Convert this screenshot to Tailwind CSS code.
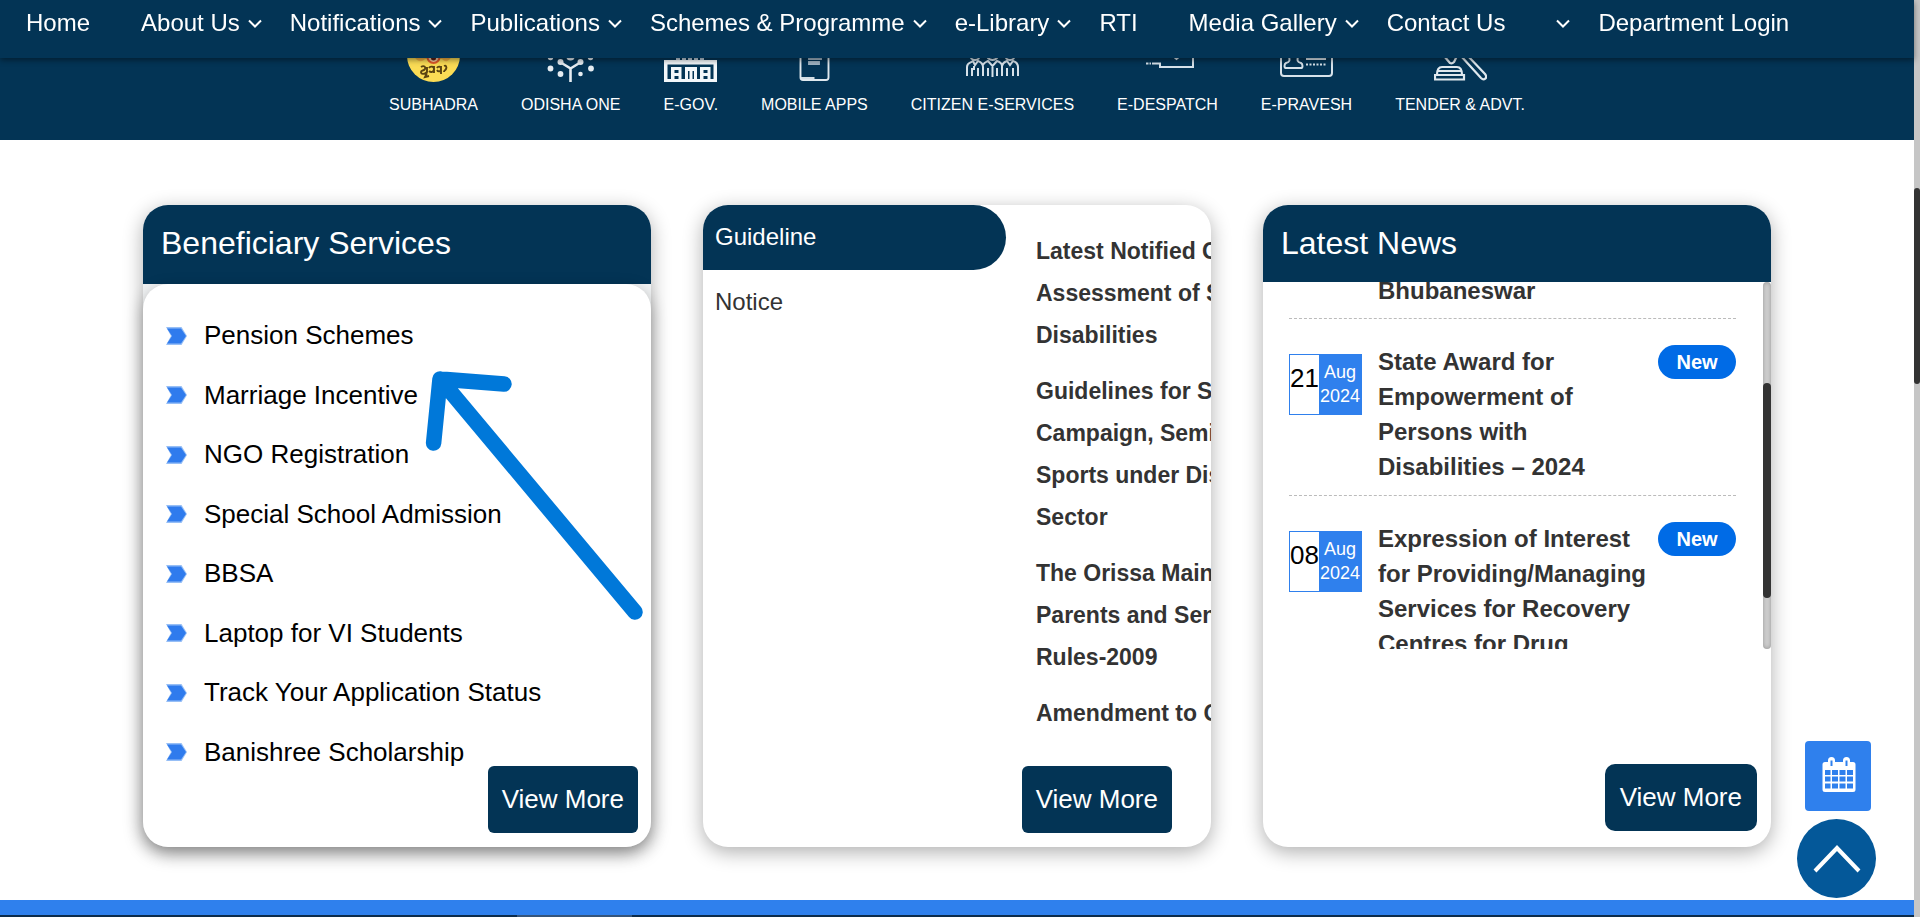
<!DOCTYPE html>
<html lang="en">
<head>
<meta charset="utf-8">
<meta name="viewport" content="width=device-width, initial-scale=1">
<title>Department Services</title>
<script src="https://cdn.jsdelivr.net/npm/@tailwindcss/browser@4"></script>
</head>
<body class="flex bg-white font-['Liberation_Sans',Arial,sans-serif] text-black">
<svg class="hidden" aria-hidden="true">
  <symbol id="chev" viewBox="0 0 14 10"><path d="M1 1.5l6 6 6-6" fill="none" stroke="currentColor" stroke-width="2"/></symbol>
  <symbol id="bullet" viewBox="0 0 21 18"><path d="M0 0h15.500l5.500 9-5.500 9H0l5-9z" fill="#2f80ed" opacity=".5"/><path d="M1 1.500h14l5 7.500-5 7.500H1l5-7.500z" fill="#2f7bed"/></symbol>
</svg>

<div class="min-w-0 flex-1">
  <nav class="fixed left-0 right-[6px] top-0 z-20 bg-[#033455] pb-[17px] pl-[26px] pt-[5px] text-2xl leading-9 text-white shadow-[0_2px_6px_rgba(0,0,0,0.45)]">
    <ul class="flex whitespace-nowrap leading-9">
      <li><a href="#" class="mr-[51px]">Home</a></li>
      <li><a href="#" class="mr-7 flex items-center gap-2">About Us<svg class="h-[10px] w-[14px] translate-y-px"><use href="#chev"/></svg></a></li>
      <li><a href="#" class="mr-7 flex items-center gap-2">Notifications<svg class="h-[10px] w-[14px] translate-y-px"><use href="#chev"/></svg></a></li>
      <li><a href="#" class="mr-7 flex items-center gap-2">Publications<svg class="h-[10px] w-[14px] translate-y-px"><use href="#chev"/></svg></a></li>
      <li><a href="#" class="mr-7 flex items-center gap-2">Schemes &amp; Programme<svg class="h-[10px] w-[14px] translate-y-px"><use href="#chev"/></svg></a></li>
      <li><a href="#" class="mr-7 flex items-center gap-2">e-Library<svg class="h-[10px] w-[14px] translate-y-px"><use href="#chev"/></svg></a></li>
      <li><a href="#" class="mr-[51px]">RTI</a></li>
      <li><a href="#" class="mr-7 flex items-center gap-2">Media Gallery<svg class="h-[10px] w-[14px] translate-y-px"><use href="#chev"/></svg></a></li>
      <li><a href="#" class="mr-[51px]">Contact Us</a></li>
      <li class="flex"><a href="#" aria-label="More" class="mr-7 flex items-center"><svg class="h-[10px] w-[14px] translate-y-px"><use href="#chev"/></svg></a></li>
      <li><a href="#">Department Login</a></li>
    </ul>
  </nav>

  <section class="bg-[#033455] pb-[23px] pt-[29px] text-base leading-6 text-white">
    <ul class="flex justify-center gap-[43px] whitespace-nowrap">
      <li><a href="#" class="flex flex-col items-center gap-[11px]">
        <svg class="size-[53px]" viewBox="0 0 53 53"><circle cx="26.500" cy="26.500" r="26.500" fill="#fbdc55"/><path d="M1 18a26.500 26.500 0 0 1 51 0l-9 12c-4 4-6 2-8 0H18c-3 3-6 3-9 0z" fill="#e98a2b" opacity=".55"/><circle cx="26.500" cy="28" r="6" fill="#f6c9a0" stroke="#e0592a" stroke-width="2"/><circle cx="26.500" cy="29" r="2.500" fill="#5b1d12"/><path d="M14 38c3-2 5 0 4 2s-4 1-4 3 3 3 6 0v-5m0 6l-2 4 4-1M22 39c1-2 5-2 5 1s-3 4-5 2m5-5v7m3-5c1-2 4-2 4 1s-3 3-4 1m4-4v8m3-8c2-1 3 1 2 3s-2 1-2 3" fill="none" stroke="#5a4312" stroke-width="1.900"/></svg>SUBHADRA</a></li>
      <li><a href="#" class="flex flex-col items-center gap-[11px]">
        <svg class="size-[53px]" viewBox="0 0 53 53" fill="#e6edf2"><path d="M26.500 53V39.500L16 33M26.500 39.500L37 33" stroke="#e6edf2" stroke-width="2.600" fill="none"/><circle cx="16.500" cy="33" r="3"/><circle cx="36.500" cy="33" r="3"/><circle cx="6.500" cy="39.500" r="2.900"/><circle cx="47" cy="39.500" r="2.900"/><circle cx="16.500" cy="45" r="2.900"/><circle cx="36.500" cy="45" r="2.300"/><circle cx="6.500" cy="28.500" r="2.700"/><circle cx="46.500" cy="28.500" r="2.700"/><circle cx="26.500" cy="27" r="4.500"/></svg>ODISHA ONE</a></li>
      <li><a href="#" class="flex flex-col items-center gap-[11px]">
        <svg class="size-[53px]" viewBox="0 0 53 53"><path d="M12 31v-3h4v3m2 0v-3h4v3m2 0v-3h4v3m2 0v-3h4v3m2 0v-3h4v3" fill="#b9c9d5"/><path d="M0 31h53v22H0z" fill="#f3f7fa"/><path d="M3.500 35.500h46V50h-46z" fill="#033455"/><path d="M7 50V38h10.500v12h-3v-3h-4v3zm14 0V38h12v12h-3v-8h-1.500v8h-3v-8H24v8zm15 0V38h10.500v12h-3v-3h-4v3z" fill="#f3f7fa"/><path d="M10.500 41h4v3h-4zm29 0h4v3h-4z" fill="#033455"/></svg>E-GOV.</a></li>
      <li><a href="#" class="flex flex-col items-center gap-[11px]">
        <svg class="size-[53px]" viewBox="0 0 53 53" fill="none" stroke="#dfe8ee" stroke-width="1.900"><rect x="12.500" y="3" width="28" height="48" rx="2.500"/><path d="M12.500 49h14"/><path d="M21 27h12v3H21zm0 6h10v2H21z" fill="#9fb3c3" stroke="#9fb3c3"/></svg>MOBILE APPS</a></li>
      <li><a href="#" class="flex flex-col items-center gap-[11px]">
        <svg class="size-[53px]" viewBox="0 0 53 53" fill="none" stroke="#d7e2ea" stroke-width="2"><circle cx="9" cy="26" r="5"/><circle cx="26.500" cy="25" r="6"/><circle cx="44" cy="26" r="5"/><path d="M1 47V38c0-5 4-4 6-6l2 4 3-4c3 1 5 3 5 6v9M6 47v-8m6 8v-8m-4-2v4M17 36c1-3 3-3 5-4l4.500 5 4.500-5c3 1 5 2 5 5v10M22 47v-8m9 8v-8m-4.500-1v10M36 37c1-4 3-4 5-5l3 4 3-4c3 1 5 3 5 6v9M41 47v-8m6 8v-8"/></svg>CITIZEN E-SERVICES</a></li>
      <li><a href="#" class="flex flex-col items-center gap-[11px]">
        <svg class="size-[53px]" viewBox="0 0 53 53" fill="none" stroke="#d7e2ea" stroke-width="2"><path d="M19 10h33v28H19V34.500h-8"/><path d="M5 34.500h2.500m1 0H10"/><path d="M32 27l3.500 3 3.500-3"/></svg>E-DESPATCH</a></li>
      <li><a href="#" class="flex flex-col items-center gap-[11px]">
        <svg class="size-[53px]" viewBox="0 0 53 53" fill="none" stroke="#d7e2ea" stroke-width="2"><rect x="1" y="8" width="51" height="39" rx="3"/><path d="M9 28c0-8 9-8 9 0-1 3-1 5 3 6 2 1 2 5 0 5H6c-2 0-2-4 0-5 4-1 4-3 3-6z"/><path d="M26 30h20"/><path d="M26 35.500h20" stroke-dasharray="2 1.500"/></svg>E-PRAVESH</a></li>
      <li><a href="#" class="flex flex-col items-center gap-[11px]">
        <svg class="size-[53px]" viewBox="0 0 53 53" fill="none" stroke="#dfe8ee" stroke-width="2.200"><path d="M1 50.500V46h29v4.500zM3 46c0-5 1-8 5-8h15c4 0 5 3 5 8M4 42h23M10 27l6 7c2 1 3 0 4-1l3-6"/><path d="M27 27l20 22c3 3 7 0 4-4L33 26"/></svg>TENDER &amp; ADVT.</a></li>
    </ul>
  </section>

  <main class="grid grid-cols-3 gap-[52px] px-[143px] pb-[53px] pt-[65px]">
    <section class="relative flex h-[642px] flex-col rounded-[25px] bg-[#f1f3f4] shadow-[0_5px_20px_rgba(0,0,0,0.32)]">
      <h2 class="rounded-t-[25px] bg-[#033455] px-[18px] pb-[17px] pt-[14px] text-[32px] leading-[48px] text-white">Beneficiary Services</h2>
      <div class="flex-1 rounded-[25px] bg-white pl-[23px] pt-[22px] shadow-[0_5px_16px_rgba(0,0,0,0.3)]">
        <ul class="grid h-[476px] grid-rows-8 text-[26px]">
          <li class="flex items-center"><a href="#" class="flex items-center gap-[17px]"><svg class="h-[18px] w-[21px]"><use href="#bullet"/></svg>Pension Schemes</a></li>
          <li class="flex items-center"><a href="#" class="flex items-center gap-[17px]"><svg class="h-[18px] w-[21px]"><use href="#bullet"/></svg>Marriage Incentive</a></li>
          <li class="flex items-center"><a href="#" class="flex items-center gap-[17px]"><svg class="h-[18px] w-[21px]"><use href="#bullet"/></svg>NGO Registration</a></li>
          <li class="flex items-center"><a href="#" class="flex items-center gap-[17px]"><svg class="h-[18px] w-[21px]"><use href="#bullet"/></svg>Special School Admission</a></li>
          <li class="flex items-center"><a href="#" class="flex items-center gap-[17px]"><svg class="h-[18px] w-[21px]"><use href="#bullet"/></svg>BBSA</a></li>
          <li class="flex items-center"><a href="#" class="flex items-center gap-[17px]"><svg class="h-[18px] w-[21px]"><use href="#bullet"/></svg>Laptop for VI Students</a></li>
          <li class="flex items-center"><a href="#" class="flex items-center gap-[17px]"><svg class="h-[18px] w-[21px]"><use href="#bullet"/></svg>Track Your Application Status</a></li>
          <li class="flex items-center"><a href="#" class="flex items-center gap-[17px]"><svg class="h-[18px] w-[21px]"><use href="#bullet"/></svg>Banishree Scholarship</a></li>
        </ul>
      </div>
      <a href="#" class="absolute bottom-[14px] right-[13px] rounded-md bg-[#033455] px-[14px] text-[26px] leading-[67px] text-white">View More</a>
      <svg class="pointer-events-none absolute left-0 top-0 h-[420px] w-[508px]" viewBox="0 0 508 420" fill="none" stroke="#0078d9" stroke-width="15.500" stroke-linecap="round" stroke-linejoin="round"><path d="M290.600 238L297 174l64 5M297 174l195 233"/></svg>
    </section>

    <section class="relative flex h-[642px] overflow-hidden rounded-[25px] bg-white shadow-[0_5px_20px_rgba(0,0,0,0.32)]">
      <div role="tablist" class="w-[303px] flex-none text-2xl">
        <button role="tab" aria-selected="true" class="block w-full rounded-r-[33px] bg-[#033455] px-3 pb-[2px] text-left leading-[63px] text-white">Guideline</button>
        <button role="tab" aria-selected="false" class="block w-full px-3 pb-[2px] text-left leading-[63px] text-[#333]">Notice</button>
      </div>
      <ul class="flex min-w-0 flex-1 flex-col gap-[14px] overflow-hidden whitespace-nowrap pl-[30px] pt-[25px] text-[23px] font-bold leading-[42px] text-[#333]">
        <li>Latest Notified Gu<br>Assessment of Sp<br>Disabilities</li>
        <li>Guidelines for Sp<br>Campaign, Semin<br>Sports under Disa<br>Sector</li>
        <li>The Orissa Maint<br>Parents and Seni<br>Rules-2009</li>
        <li>Amendment to Gu</li>
      </ul>
      <a href="#" class="absolute bottom-[14px] right-[39px] rounded-md bg-[#033455] px-[14px] text-[26px] leading-[67px] text-white">View More</a>
    </section>

    <section class="relative h-[642px] rounded-[25px] bg-white shadow-[0_5px_20px_rgba(0,0,0,0.32)]">
      <h2 class="rounded-t-[25px] bg-[#033455] px-[18px] pb-[15px] pt-[14px] text-[32px] leading-[48px] text-white">Latest News</h2>
      <div class="flex h-[367px] overflow-hidden">
        <ul class="flex-1 pl-[26px] pr-[27px] text-2xl font-bold leading-[35px] text-[#333]">
          <li class="-mt-[9px] border-b border-dashed border-[#bbb] pb-[10px] pl-[89px]">Bhubaneswar</li>
          <li class="flex items-start border-b border-dashed border-[#bbb] pb-[11px] pt-[25px]">
            <time class="mr-4 mt-[10px] flex h-[61px] w-[73px] flex-none border border-[#2f80ed] font-normal">
              <span class="flex-1 text-center text-[26px] leading-[46px] text-black">21</span>
              <span class="w-[42px] bg-[#2f80ed] pt-[5px] text-center text-lg leading-6 text-white">Aug 2024</span>
            </time>
            <a href="#" class="flex-1 pr-2">State Award for Empowerment of Persons with Disabilities – 2024</a>
            <span class="mt-px w-[78px] flex-none rounded-full bg-[#006be6] text-center text-xl leading-[34px] text-white">New</span>
          </li>
          <li class="flex items-start pt-[25px]">
            <time class="mr-4 mt-[10px] flex h-[61px] w-[73px] flex-none border border-[#2f80ed] font-normal">
              <span class="flex-1 text-center text-[26px] leading-[46px] text-black">08</span>
              <span class="w-[42px] bg-[#2f80ed] pt-[5px] text-center text-lg leading-6 text-white">Aug 2024</span>
            </time>
            <a href="#" class="flex-1 pr-2">Expression of Interest for Providing/Managing Services for Recovery Centres for Drug</a>
            <span class="mt-px w-[78px] flex-none rounded-full bg-[#006be6] text-center text-xl leading-[34px] text-white">New</span>
          </li>
        </ul>
        <div class="w-2 flex-none rounded bg-[#d2d2d2] pt-[101px] shadow-[inset_0_0_5px_rgba(0,0,0,0.3)]"><div class="h-[215px] rounded bg-[#333]"></div></div>
      </div>
      <a href="#" class="absolute bottom-4 right-[14px] rounded-[10px] bg-[#033455] px-[15px] text-[26px] leading-[67px] text-white">View More</a>
    </section>
  </main>

  <div class="h-[15px] bg-[#2f80ed]"></div>
  <footer class="h-[2px] bg-[#0c2c4c]"><div class="ml-[27%] h-full w-[6%] bg-[#35557c]"></div></footer>
</div>

<div class="w-[6px] flex-none bg-[#c6c6c6] pt-[188px]"><div class="h-[196px] rounded bg-[#333]"></div></div>

<div class="fixed bottom-[19px] right-11 z-30 flex flex-col items-center gap-2">
  <button aria-label="Calendar" class="ml-[2px] flex h-[70px] w-[66px] items-center justify-center rounded bg-[#2f80ed] pb-[2px] pl-[2px]">
    <svg class="h-[36px] w-[34px]" viewBox="0 0 34 36"><path fill="#fff" fill-rule="evenodd" d="M3 5h3V3.500a3.500 3.500 0 0 1 7 0V5h8V3.500a3.500 3.500 0 0 1 7 0V5h3a2.500 2.500 0 0 1 2.500 2.500v25A2.500 2.500 0 0 1 31 35H3a2.500 2.500 0 0 1-2.500-2.500v-25A2.500 2.500 0 0 1 3 5zm5.500-1.500V9h2V3.500zm15 0V9h2V3.500zM3 13v5h5.500v-5zm7 0v5h6v-5zm7.500 0v5h6v-5zm7.500 0v5h6v-5zM3 19.500v5h5.500v-5zm7 0v5h6v-5zm7.500 0v5h6v-5zm7.500 0v5h6v-5zM3 26.500v5h5.500v-5zm7 0v5h6v-5zm7.500 0v5h6v-5zm7.500 0v5h6v-5z"/></svg>
  </button>
  <button aria-label="Back to top" class="flex size-[79px] items-center justify-center rounded-full bg-[#045899]">
    <svg class="h-[28px] w-[50px]" viewBox="0 0 50 28"><path d="M3 26L25 3l22 23" fill="none" stroke="#fff" stroke-width="4"/></svg>
  </button>
</div>
</body>
</html>
